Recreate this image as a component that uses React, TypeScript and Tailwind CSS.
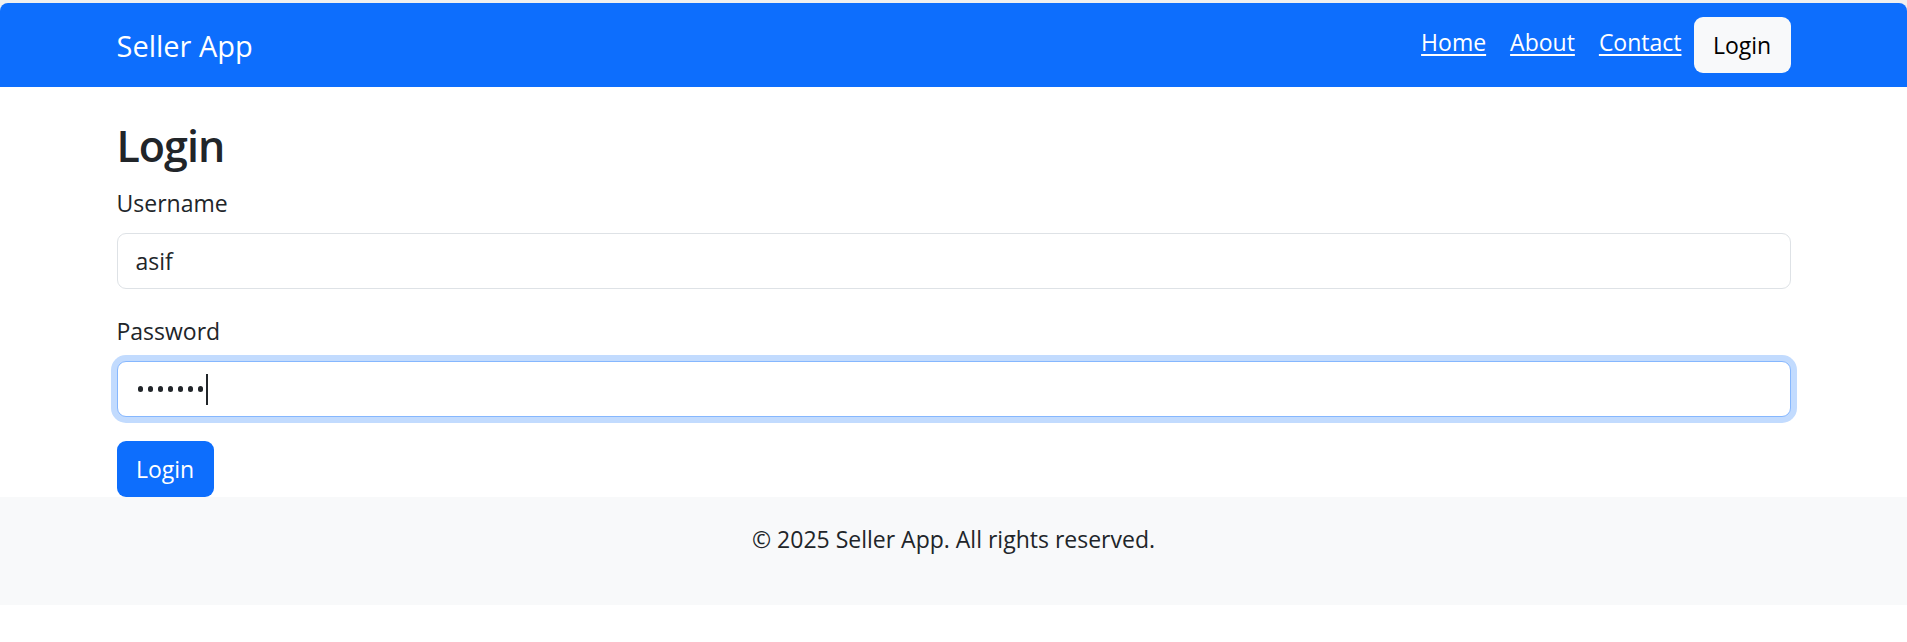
import React from "react";

export default function App() {
  const dots = [0, 1, 2, 3, 4, 5, 6];
  return (
    <div className="min-h-screen bg-white font-['Open_Sans','Noto_Sans',sans-serif] text-[#212529]">
      <div className="bg-[#f0f0f0] pt-[3px]">
        <nav className="h-[84px] rounded-t-[8px] bg-[#0d6efd]">
          <div className="mx-auto flex h-full w-[1710px] items-center justify-between px-[18px]">
            <a className="text-[29px] leading-[45px] text-white">Seller App</a>
            <div className="flex items-center">
              <a className="mb-[6px] px-[12px] text-[23px] leading-[36px] text-white underline decoration-[2px] underline-offset-[3px]">Home</a>
              <a className="mb-[6px] px-[12px] text-[23px] leading-[36px] text-white underline decoration-[2px] underline-offset-[3px]">About</a>
              <a className="mb-[6px] px-[12px] text-[23px] leading-[36px] text-white underline decoration-[2px] underline-offset-[3px]">Contact</a>
              <button className="h-[56px] w-[97px] rounded-[9px] bg-[#f8f9fa] text-center text-[23px] leading-[36px] text-black">Login</button>
            </div>
          </div>
        </nav>
      </div>

      <main className="mx-auto w-[1710px] px-[18px] pt-[32px]">
        <h2 className="mb-[12px] text-[43px] font-semibold leading-[54px] tracking-[-1px]">Login</h2>
        <form onSubmit={(e) => e.preventDefault()}>
          <div className="mb-[24px]">
            <label className="mb-[12px] block pt-[1px] text-[23px] leading-[35px]">Username</label>
            <input
              readOnly
              value="asif"
              className="block h-[56px] w-full rounded-[9px] border-[1.5px] border-[#dee2e6] bg-white px-[18px] text-[23px] text-[#212529] outline-none"
            />
          </div>
          <div className="mb-[24px]">
            <label className="mb-[12px] block pt-[1px] text-[23px] leading-[35px]">Password</label>
            <div className="flex h-[56px] w-full items-center rounded-[9px] border-[1.5px] border-[#86b7fe] bg-white pl-[20px] pr-[18px] shadow-[0_0_0_6px_#c2dbfe]">
              <div className="flex items-center gap-[4.5px]">
                {dots.map((d) => (
                  <span key={d} className="h-[5.5px] w-[5.5px] rounded-full bg-[#212529]" />
                ))}
              </div>
              <span className="ml-[3px] h-[31px] w-[1.5px] bg-[#212529]" />
            </div>
          </div>
          <button className="h-[56px] w-[97px] rounded-[9px] bg-[#0d6efd] text-center text-[23px] leading-[36px] text-white">Login</button>
        </form>
      </main>

      <footer className="bg-[#f8f9fa] pb-[48px] pt-[24px] text-center">
        <p className="text-[23px] leading-[36px]">© 2025 Seller App. All rights reserved.</p>
      </footer>
    </div>
  );
}
